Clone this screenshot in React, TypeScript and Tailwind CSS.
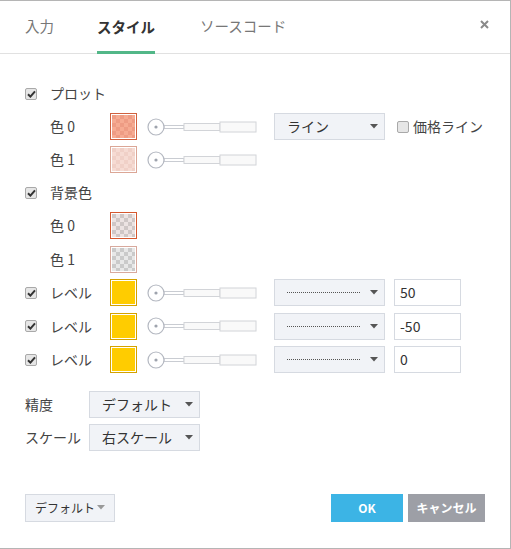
import React from "react";

const font = { fontFamily: '"Noto Sans CJK JP", "Noto Sans", sans-serif' };

function Check({ checked = true }: { checked?: boolean }) {
  return (
    <span className="flex h-[12px] w-[12px] shrink-0 items-center justify-center rounded-[2px] border border-[#a9a9a9] bg-[#e6e6e6]">
      {checked && (
        <svg width="9" height="8" viewBox="0 0 9 8">
          <path d="M1 4.2 L3.4 6.6 L8 1.4" stroke="#333" strokeWidth="2" fill="none" />
        </svg>
      )}
    </span>
  );
}

function Swatch({ border, a, b, solid }: { border: string; a?: string; b?: string; solid?: string }) {
  return (
    <span className="block h-[27px] w-[27px] shrink-0 border p-[1px]" style={{ borderColor: border }}>
      {solid ? (
        <span className="block h-full w-full" style={{ background: solid }} />
      ) : (
        <svg width="23" height="23" className="block">
          <defs>
            <pattern id={`p${a}${b}`} width="8" height="8" patternUnits="userSpaceOnUse">
              <rect width="8" height="8" fill={a} />
              <rect width="4" height="4" fill={b} />
              <rect x="4" y="4" width="4" height="4" fill={b} />
            </pattern>
          </defs>
          <rect width="23" height="23" fill={`url(#p${a}${b})`} />
        </svg>
      )}
    </span>
  );
}

function Slider() {
  return (
    <svg width="110" height="18" viewBox="0 0 110 18" className="block shrink-0">
      <rect x="17" y="7.5" width="20" height="3" fill="#fff" stroke="#c9ccd2" />
      <rect x="37" y="5.5" width="36" height="7" fill="#f9f9f9" stroke="#d2d4d8" />
      <rect x="73" y="4" width="36" height="10" fill="#f9f9f9" stroke="#d2d4d8" />
      <circle cx="9" cy="9" r="8" fill="#fff" stroke="#b4b8c1" strokeWidth="1.2" />
      <circle cx="9" cy="9" r="1.6" fill="#9ea3ad" />
    </svg>
  );
}

function Caret({ color = "#555" }: { color?: string }) {
  return (
    <svg width="8" height="5" viewBox="0 0 8 5" className="block shrink-0">
      <path d="M0 0 L8 0 L4 4.5 Z" fill={color} />
    </svg>
  );
}

function Select({ children }: { children: React.ReactNode }) {
  return (
    <div className="flex h-[27px] w-[111px] shrink-0 items-center justify-between whitespace-nowrap border border-[#d6dae1] bg-[#f1f3f7] pl-[12px] pr-[6px] text-[14px] text-[#333]">
      <span className="flex items-center">{children}</span>
      <Caret />
    </div>
  );
}

function Dotted() {
  return <span className="block w-[73px] border-t border-dotted border-[#555]" />;
}

function Input({ value }: { value: string }) {
  return (
    <div className="ml-[9px] flex h-[27px] w-[67px] shrink-0 items-center border border-[#d6dae1] bg-white pl-[5px] text-[14px] text-[#333]">
      {value}
    </div>
  );
}

export default function App() {
  return (
    <div style={font} className="h-[549px] w-[511px] border-b border-r border-t border-[#b5b5b5] bg-white text-[14px] text-[#444]">
      <div className="flex h-[53px] items-stretch border-b border-[#e1e1e1] pl-[25px] pr-[21px]">
        <div className="flex items-center pb-[3px] text-[14.5px] text-[#777]">入力</div>
        <div className="-mb-[1px] ml-[43px] flex items-center border-b-[3px] border-[#52b788] pt-[2px] text-[14.5px] font-bold text-[#333]">スタイル</div>
        <div className="ml-[45px] flex items-center pb-[3px] text-[14.5px] text-[#777]">ソースコード</div>
        <div className="ml-auto flex items-center pb-[5px]">
          <svg width="9" height="9" viewBox="0 0 9 9" className="block">
            <path d="M1 1 L8 8 M8 1 L1 8" stroke="#8a8a8a" strokeWidth="2" />
          </svg>
        </div>
      </div>

      <div className="whitespace-nowrap pl-[25px] pt-[23px]">
        <div className="flex h-[33px] items-center">
          <Check />
          <span className="ml-[13px]">プロット</span>
        </div>
        <div className="flex h-[33px] items-center">
          <span className="w-[85px] shrink-0 pl-[25px]">色 0</span>
          <Swatch border="#d0613f" a="#f6ab92" b="#ee9c84" />
          <span className="ml-[10px] shrink-0"><Slider /></span>
          <span className="ml-[17px] shrink-0"><Select>ライン</Select></span>
          <span className="ml-[12px] shrink-0"><Check checked={false} /></span>
          <span className="ml-[4px]">価格ライン</span>
        </div>
        <div className="flex h-[33px] items-center">
          <span className="w-[85px] shrink-0 pl-[25px]">色 1</span>
          <Swatch border="#dba696" a="#f6dbd3" b="#f0d0c7" />
          <span className="ml-[10px] shrink-0"><Slider /></span>
        </div>
        <div className="flex h-[33px] items-center">
          <Check />
          <span className="ml-[13px]">背景色</span>
        </div>
        <div className="flex h-[33px] items-center">
          <span className="w-[85px] shrink-0 pl-[25px]">色 0</span>
          <Swatch border="#d5582f" a="#ece3e2" b="#cfc7c6" />
        </div>
        <div className="flex h-[34px] items-center">
          <span className="w-[85px] shrink-0 pl-[25px]">色 1</span>
          <Swatch border="#d8a99d" a="#e8e8e8" b="#cacaca" />
        </div>
        {["50", "-50", "0"].map((v, i) => (
          <div key={i} className="flex h-[33.5px] items-center">
            <Check />
            <span className="ml-[13px] w-[60px] shrink-0">レベル</span>
            <Swatch border="#d4a200" solid="#ffcc00" />
            <span className="ml-[10px] shrink-0"><Slider /></span>
            <span className="ml-[17px] shrink-0"><Select><Dotted /></Select></span>
            <Input value={v} />
          </div>
        ))}
        <div className="mt-[11px] flex h-[33px] items-center">
          <span className="w-[64px] shrink-0">精度</span>
          <Select>デフォルト</Select>
        </div>
        <div className="flex h-[33px] items-center">
          <span className="w-[64px] shrink-0">スケール</span>
          <Select>右スケール</Select>
        </div>
      </div>

      <div className="mt-[40px] flex items-center whitespace-nowrap pl-[25px] pr-[25px]">
        <div className="flex h-[28px] w-[90px] shrink-0 items-center justify-between border border-[#d6dae1] bg-[#f1f3f7] pl-[9px] pr-[9px] text-[12px] text-[#333]">
          <span>デフォルト</span>
          <Caret color="#999" />
        </div>
        <div className="ml-auto flex h-[28px] w-[72px] shrink-0 items-center justify-center bg-[#3cb4e5] text-[12px] font-bold text-white">OK</div>
        <div className="ml-[5px] flex h-[28px] w-[77px] shrink-0 items-center justify-center bg-[#9d9fa6] text-[12px] font-bold text-white">キャンセル</div>
      </div>
    </div>
  );
}
